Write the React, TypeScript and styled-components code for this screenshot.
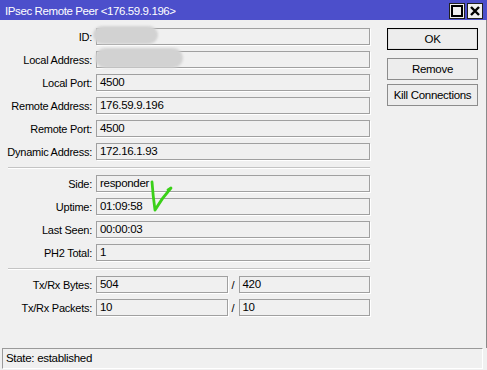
import React from "react";
import styled, { createGlobalStyle } from "styled-components";

const GlobalStyle = createGlobalStyle`
  html, body {
    margin: 0;
    padding: 0;
    background: #f0f0f0;
  }
  body {
    font-family: "Liberation Sans", Arial, sans-serif;
    font-size: 11px;
    color: #000;
  }
`;

type Row = { label: string; value?: string; pair?: [string, string] };

const groups: Row[][] = [
  [
    { label: "ID", value: "" },
    { label: "Local Address", value: "" },
    { label: "Local Port", value: "4500" },
    { label: "Remote Address", value: "176.59.9.196" },
    { label: "Remote Port", value: "4500" },
    { label: "Dynamic Address", value: "172.16.1.93" },
  ],
  [
    { label: "Side", value: "responder" },
    { label: "Uptime", value: "01:09:58" },
    { label: "Last Seen", value: "00:00:03" },
    { label: "PH2 Total", value: "1" },
  ],
  [
    { label: "Tx/Rx Bytes", pair: ["504", "420"] },
    { label: "Tx/Rx Packets", pair: ["10", "10"] },
  ],
];

export default function App() {
  return (
    <Window>
      <GlobalStyle />
      <TitleBar>
        <Title>IPsec Remote Peer &lt;176.59.9.196&gt;</Title>
        <TitleButtons>
          <TitleButton>
            <svg width="12" height="12" viewBox="0 0 12 12">
              <rect x="1" y="1" width="10" height="10" fill="none" stroke="#000" strokeWidth="2" />
            </svg>
          </TitleButton>
          <TitleButton>
            <svg width="12" height="12" viewBox="0 0 12 12">
              <path d="M2 2 L10 10 M10 2 L2 10" stroke="#000" strokeWidth="2.4" />
            </svg>
          </TitleButton>
        </TitleButtons>
      </TitleBar>
      <Body>
        <Form>
          {groups.map((rows, gi) => (
            <React.Fragment key={gi}>
              {gi > 0 && <Separator />}
              <Group>
                {rows.map((row) => (
                  <FieldRow key={row.label}>
                    <Label>{row.label}:</Label>
                    {row.pair ? (
                      <PairWrap>
                        <Field>{row.pair[0]}</Field>
                        <Slash>/</Slash>
                        <Field>{row.pair[1]}</Field>
                      </PairWrap>
                    ) : (
                      <Field>{row.value}</Field>
                    )}
                  </FieldRow>
                ))}
              </Group>
            </React.Fragment>
          ))}
          <Blob style={{ left: 93, top: -2, width: 65, height: 18 }} />
          <Blob style={{ left: 95, top: 20, width: 88, height: 20 }} />
          <Check width="30" height="40" viewBox="0 0 30 40">
            <path
              d="M3 3 Q4 17 6 31 Q13 19 22 9 L19 11"
              fill="none"
              stroke="#3ad018"
              strokeWidth="2.8"
              strokeLinecap="round"
              strokeLinejoin="round"
            />
          </Check>
        </Form>
        <Buttons>
          <Button $default>OK</Button>
          <Button>Remove</Button>
          <Button>Kill Connections</Button>
        </Buttons>
      </Body>
      <StatusBar>State: established</StatusBar>
    </Window>
  );
}

const Window = styled.div`
  width: 487px;
  height: 370px;
  display: flex;
  flex-direction: column;
  box-sizing: border-box;
  background: #f0f0f0;
  overflow: hidden;
`;

const TitleBar = styled.div`
  height: 20px;
  flex: none;
  background: #4c4fcb;
  display: flex;
  align-items: center;
  justify-content: space-between;
  padding: 0 4px 0 5px;
`;

const Title = styled.div`
  color: #fff;
  font-size: 11.5px;
  letter-spacing: -0.4px;
  padding-top: 1px;
`;

const TitleButtons = styled.div`
  display: flex;
  gap: 2px;
  padding-top: 1px;
`;

const TitleButton = styled.div`
  width: 14px;
  height: 14px;
  border: 1px solid #202020;
  background: #f0f0f0;
  display: flex;
  align-items: center;
  justify-content: center;
`;

const Body = styled.div`
  flex: 1;
  display: flex;
  border-right: 1px solid #8a8a8a;
  padding: 8px 8px 0 0;
`;

const Form = styled.div`
  position: relative;
  width: 370px;
  display: flex;
  flex-direction: column;
`;

const Group = styled.div`
  display: flex;
  flex-direction: column;
  gap: 6px;
`;

const Separator = styled.div`
  margin: 7px 0 6px 8px;
  height: 1px;
  background: #c4c4c4;
  border-bottom: 1px solid #fff;
`;

const FieldRow = styled.div`
  display: flex;
  align-items: center;
  height: 17px;
`;

const Label = styled.div`
  width: 93px;
  text-align: right;
  flex: none;
  box-sizing: border-box;
  padding-right: 1px;
  margin-right: 3px;
  letter-spacing: -0.25px;
`;

const Field = styled.div`
  flex: 1;
  height: 17px;
  box-sizing: border-box;
  border: 1px solid #a0a0a0;
  box-shadow: 1px 1px 0 #fff;
  background: #f0f0f0;
  padding: 0 3px;
  line-height: 15px;
  font-size: 11.5px;
  letter-spacing: -0.3px;
  white-space: nowrap;
  overflow: hidden;
`;

const PairWrap = styled.div`
  flex: 1;
  display: flex;
  align-items: center;
`;

const Slash = styled.div`
  width: 11px;
  text-align: center;
  font-size: 11px;
`;

const Blob = styled.div`
  position: absolute;
  background: #d2d2d2;
  border-radius: 10px;
  filter: blur(1px);
`;

const Check = styled.svg`
  position: absolute;
  left: 149px;
  top: 151px;
`;

const Buttons = styled.div`
  display: flex;
  flex-direction: column;
  gap: 4px;
  margin-left: 17px;
  width: 91px;
`;

const Button = styled.div<{ $default?: boolean }>`
  height: 22px;
  box-sizing: border-box;
  border: 1px solid ${(p) => (p.$default ? "#000" : "#8c8c8c")};
  box-shadow: ${(p) => (p.$default ? "inset 0 0 0 1px #e0e0e0" : "none")};
  margin-bottom: ${(p) => (p.$default ? "4px" : "0")};
  background: #ededed;
  display: flex;
  align-items: center;
  justify-content: center;
  font-size: 11.5px;
  letter-spacing: -0.3px;
`;

const StatusBar = styled.div`
  flex: none;
  height: 21px;
  margin: 0 4px 1px 2px;
  box-sizing: border-box;
  border-top: 1px solid #9a9a9a;
  border-left: 1px solid #9a9a9a;
  border-right: 1px solid #fff;
  border-bottom: 1px solid #fff;
  padding: 0 3px;
  line-height: 19px;
  font-size: 11.5px;
  letter-spacing: -0.3px;
`;
